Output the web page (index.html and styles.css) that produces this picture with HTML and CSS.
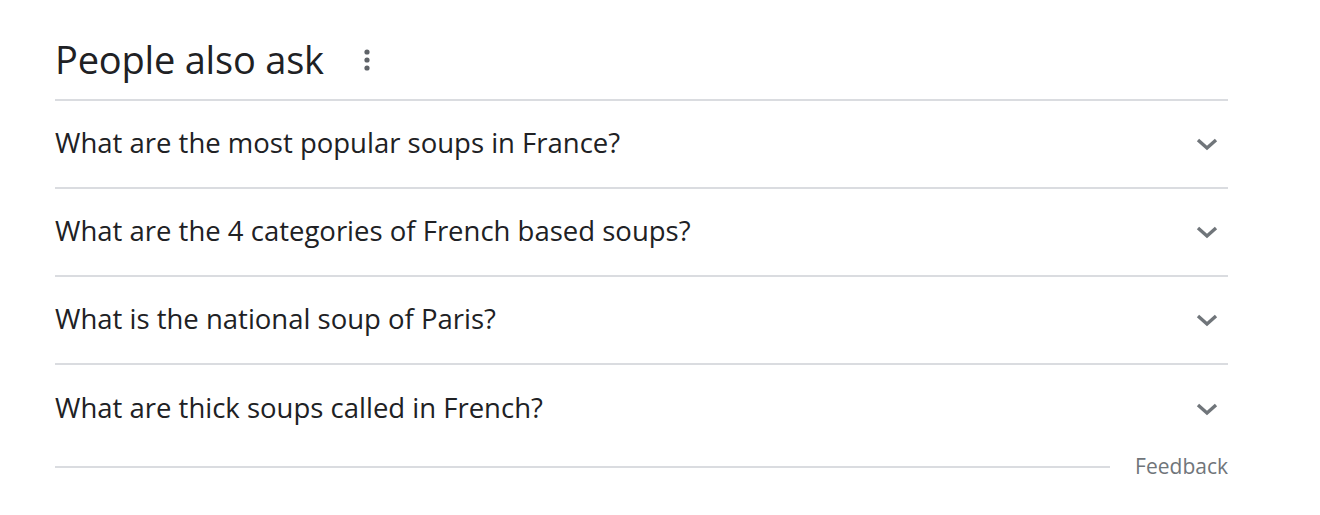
FILE: index.html
```html
<!DOCTYPE html>
<html lang="en">
<head>
<meta charset="utf-8">
<title>People also ask</title>
<link rel="stylesheet" href="styles.css">
</head>
<body>
<div class="paa">
  <div class="paa-head">
    <h2 class="paa-title">People also ask</h2>
    <span class="kebab" aria-label="More options">
      <svg width="6" height="22" viewBox="0 0 6 22"><circle cx="3" cy="3" r="2.6" fill="#5f6368"/><circle cx="3" cy="11" r="2.6" fill="#5f6368"/><circle cx="3" cy="19" r="2.6" fill="#5f6368"/></svg>
    </span>
  </div>
  <div class="paa-list">
    <div class="paa-row"><span class="q">What are the most popular soups in France?</span><svg class="chev" width="24" height="14" viewBox="0 0 24 14"><path d="M3 3 L12 11 L21 3" fill="none" stroke="#70757a" stroke-width="3.4"/></svg></div>
    <div class="paa-row"><span class="q">What are the 4 categories of French based soups?</span><svg class="chev" width="24" height="14" viewBox="0 0 24 14"><path d="M3 3 L12 11 L21 3" fill="none" stroke="#70757a" stroke-width="3.4"/></svg></div>
    <div class="paa-row"><span class="q">What is the national soup of Paris?</span><svg class="chev" width="24" height="14" viewBox="0 0 24 14"><path d="M3 3 L12 11 L21 3" fill="none" stroke="#70757a" stroke-width="3.4"/></svg></div>
    <div class="paa-row"><span class="q">What are thick soups called in French?</span><svg class="chev" width="24" height="14" viewBox="0 0 24 14"><path d="M3 3 L12 11 L21 3" fill="none" stroke="#70757a" stroke-width="3.4"/></svg></div>
  </div>
  <div class="paa-foot">
    <div class="foot-line"></div>
    <span class="feedback">Feedback</span>
  </div>
</div>
</body>
</html>
```
FILE: styles.css
```css
html, body {
  margin: 0;
  padding: 0;
  background: #fff;
}
body {
  font-family: "Open Sans", Roboto, "Liberation Sans", sans-serif;
  color: #202124;
}
.paa {
  width: 1173px;
  margin-left: 55px;
  padding-top: 35px;
}
.paa-head {
  display: flex;
  align-items: center;
  height: 66px;
  border-bottom: 2px solid #dadce0;
  box-sizing: border-box;
  padding-bottom: 16px;
}
.paa-title {
  margin: 0;
  font-weight: 400;
  font-size: 38px;
  letter-spacing: -0.2px;
  line-height: 1;
}
.kebab {
  display: flex;
  margin-left: 40px;
  padding-top: 2px;
}
.paa-row {
  display: flex;
  align-items: center;
  justify-content: space-between;
  height: 88px;
  border-bottom: 2px solid #dadce0;
  box-sizing: border-box;
}
.paa-row:last-child {
  border-bottom: none;
}
.q {
  font-size: 27.5px;
  line-height: 1.2;
  padding-bottom: 4px;
}
.chev {
  margin-right: 9px;
}
.paa-foot {
  display: flex;
  align-items: center;
  height: 28px;
}
.foot-line {
  flex: 1;
  height: 2px;
  background: #dadce0;
  margin-right: 25px;
}
.feedback {
  font-size: 21px;
  color: #70757a;
  padding-bottom: 2px;
}
```
